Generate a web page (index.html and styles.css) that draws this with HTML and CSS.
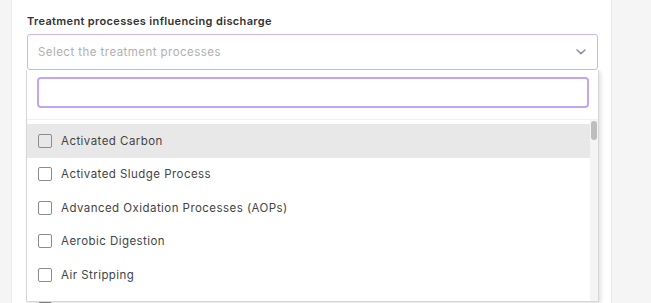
FILE: index.html
```html
<!DOCTYPE html>
<html lang="en">
<head>
    <meta charset="UTF-8">
    <meta name="viewport" content="width=device-width, initial-scale=1.0">
    <title>Treatment processes</title>
    <link rel="stylesheet" href="styles.css">
</head>
<body>
    <div class="panel">
        <div class="field">
            <label class="field-label">Treatment processes influencing discharge</label>
            <div class="select-box">
                <span class="placeholder">Select the treatment processes</span>
                <svg class="chevron" width="10" height="6" viewBox="0 0 10 6">
                    <path d="M1 1 L5 4.6 L9 1" fill="none" stroke="#8a8fa0" stroke-width="1.5" stroke-linecap="round" stroke-linejoin="round"/>
                </svg>
            </div>

            <div class="dropdown">
                <div class="search-wrap">
                    <input class="search" type="text">
                </div>
                <div class="list-wrap">
                    <ul class="options" id="options"></ul>
                    <div class="scrollbar"><div class="thumb"></div></div>
                </div>
            </div>
        </div>

        <div class="next-field">
            <span class="box"></span>
        </div>
    </div>

    <script>
        // Options for the multi select (visible part of the list)
        const processes = [
            "Activated Carbon", "Activated Sludge Process", "Advanced Oxidation Processes (AOPs)",
            "Aerobic Digestion", "Air Stripping"
        ];

        const list = document.getElementById("options");
        processes.forEach((name, i) => {
            const li = document.createElement("li");
            li.className = "option" + (i === 0 ? " active" : "");
            li.innerHTML = '<span class="box"></span>' + name;
            list.appendChild(li);
        });
    </script>
</body>
</html>
```

FILE: styles.css
```css
* {
    box-sizing: border-box;
}

body {
    margin: 0;
    height: 303px;
    overflow: hidden;
    background: #f5f5f5;
    font-family: Inter, 'Noto Sans', sans-serif;
}

.panel {
    margin-left: 11px;
    width: 601px;
    height: 100%;
    background: #fff;
    border-left: 1px solid #ebebeb;
    border-right: 1px solid #ebebeb;
    padding: 14px 13px 0 15px;
}

.field {
    position: relative;
}

.field-label {
    display: block;
    font-size: 11px;
    font-weight: 600;
    letter-spacing: 0.35px;
    color: #333;
    line-height: 14px;
    margin-bottom: 6px;
}

.select-box {
    height: 36px;
    border: 1.5px solid #cbb7f2;
    border-radius: 3px;
    display: flex;
    align-items: center;
    justify-content: space-between;
    padding: 0 10px;
}

.placeholder {
    font-size: 11.5px;
    letter-spacing: 0.45px;
    color: #b0b0b0;
}

.chevron {
    margin-right: 1px;
}

.dropdown {
    position: absolute;
    top: 100%;
    left: -1px;
    width: 573px;
    height: 232px;
    background: #fff;
    border: 1px solid #d6d6d6;
    border-top: none;
    box-shadow: 2px 2px 4px rgba(0, 0, 0, 0.12);
    display: flex;
    flex-direction: column;
    z-index: 10;
}

.search-wrap {
    padding: 7px 9px 11px 10px;
    border-bottom: 1px solid #f0f0f0;
}

.search {
    display: block;
    width: 100%;
    height: 31px;
    border: 2px solid #c3a6f0;
    border-radius: 4px;
    outline: none;
}

.list-wrap {
    flex: 1;
    display: flex;
    min-height: 0;
}

.options {
    list-style: none;
    margin: 0;
    padding: 4px 0 0;
    flex: 1;
    overflow: hidden;
}

.scrollbar {
    width: 8px;
    background: #f4f4f4;
    padding: 1px 1px 0;
}

.thumb {
    height: 19px;
    background: #bdbdbd;
    border-radius: 3px;
}

.option {
    display: flex;
    align-items: center;
    height: 33.5px;
    padding-left: 11px;
    font-size: 11.5px;
    letter-spacing: 0.45px;
    color: #444;
}

.option.active {
    background: #e8e8e8;
}

.box {
    width: 14px;
    height: 14px;
    border: 1.5px solid #8c8c8c;
    border-radius: 2px;
    margin-right: 9px;
    flex-shrink: 0;
}

.next-field {
    display: flex;
    padding-left: 11px;
    margin-top: 232px;
}
```
